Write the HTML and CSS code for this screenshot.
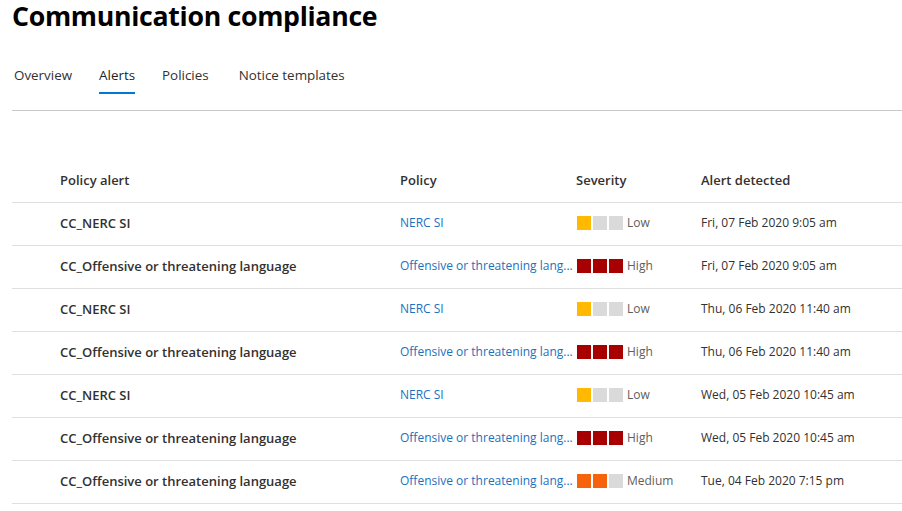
FILE: index.html
```html
<!DOCTYPE html>
<html>
<head>
<meta charset="utf-8">
<link rel="stylesheet" href="styles.css">
</head>
<body>
<div class="page">
  <h1 class="title">Communication compliance</h1>
  <nav class="tabs">
    <a class="tab">Overview</a>
    <a class="tab active">Alerts</a>
    <a class="tab">Policies</a>
    <a class="tab notice">Notice templates</a>
  </nav>
  <div class="table">
    <div class="row head">
      <div class="c1">Policy alert</div>
      <div class="c2">Policy</div>
      <div class="c3">Severity</div>
      <div class="c4">Alert detected</div>
    </div>
    <div class="row">
      <div class="c1 name">CC_NERC SI</div>
      <div class="c2 link">NERC SI</div>
      <div class="c3 sev"><span class="sq low"></span><span class="sq"></span><span class="sq"></span><span class="lbl">Low</span></div>
      <div class="c4 date">Fri, 07 Feb 2020 9:05 am</div>
    </div>
    <div class="row">
      <div class="c1 name">CC_Offensive or threatening language</div>
      <div class="c2 link">Offensive or threatening lang...</div>
      <div class="c3 sev"><span class="sq high"></span><span class="sq high"></span><span class="sq high"></span><span class="lbl">High</span></div>
      <div class="c4 date">Fri, 07 Feb 2020 9:05 am</div>
    </div>
    <div class="row">
      <div class="c1 name">CC_NERC SI</div>
      <div class="c2 link">NERC SI</div>
      <div class="c3 sev"><span class="sq low"></span><span class="sq"></span><span class="sq"></span><span class="lbl">Low</span></div>
      <div class="c4 date">Thu, 06 Feb 2020 11:40 am</div>
    </div>
    <div class="row">
      <div class="c1 name">CC_Offensive or threatening language</div>
      <div class="c2 link">Offensive or threatening lang...</div>
      <div class="c3 sev"><span class="sq high"></span><span class="sq high"></span><span class="sq high"></span><span class="lbl">High</span></div>
      <div class="c4 date">Thu, 06 Feb 2020 11:40 am</div>
    </div>
    <div class="row">
      <div class="c1 name">CC_NERC SI</div>
      <div class="c2 link">NERC SI</div>
      <div class="c3 sev"><span class="sq low"></span><span class="sq"></span><span class="sq"></span><span class="lbl">Low</span></div>
      <div class="c4 date">Wed, 05 Feb 2020 10:45 am</div>
    </div>
    <div class="row">
      <div class="c1 name">CC_Offensive or threatening language</div>
      <div class="c2 link">Offensive or threatening lang...</div>
      <div class="c3 sev"><span class="sq high"></span><span class="sq high"></span><span class="sq high"></span><span class="lbl">High</span></div>
      <div class="c4 date">Wed, 05 Feb 2020 10:45 am</div>
    </div>
    <div class="row">
      <div class="c1 name">CC_Offensive or threatening language</div>
      <div class="c2 link">Offensive or threatening lang...</div>
      <div class="c3 sev"><span class="sq med"></span><span class="sq med"></span><span class="sq"></span><span class="lbl">Medium</span></div>
      <div class="c4 date">Tue, 04 Feb 2020 7:15 pm</div>
    </div>
  </div>
</div>
</body>
</html>
```
FILE: styles.css
```css
* { box-sizing: border-box; }
html, body { margin: 0; padding: 0; background: #fff; }
body { font-family: "Open Sans", "Noto Sans", sans-serif; color: #323130; }
.page { padding: 0 0 0 12px; }
.title {
  margin: 0;
  padding-top: 1px;
  font-size: 26.7px;
  font-weight: 700;
  line-height: 30px;
  color: #000;
  letter-spacing: -0.3px;
}
.tabs {
  display: flex;
  gap: 27px;
  margin-top: 28px;
  padding-left: 2px;
  border-bottom: 1px solid #c8c8c8;
  height: 52px;
}
.tab {
  font-size: 13.4px;
  color: #323130;
  padding: 6px 0 0;
  height: 35px;
  line-height: 20px;
}
.tab.notice { margin-left: 3px; }
.tab.active { border-bottom: 2px solid #0078d4; color: #201f1e; padding-bottom: 0; height: 35px; }
.table { margin-top: 47px; }
.row {
  display: grid;
  grid-template-columns: 340px 176px 125px 1fr;
  padding-left: 48px;
  padding-bottom: 3px;
  height: 43px;
  align-items: center;
  border-bottom: 1px solid #e1dfdd;
  font-size: 12px;
}
.row.head { height: 45px; padding-bottom: 0; font-size: 13px; font-weight: 600; color: #323130; }
.name { font-size: 13px; font-weight: 600; color: #323130; }
.link { color: #1d70bd; }
.date { color: #323130; }
.sev { display: flex; align-items: center; padding-left: 1px; }
.sq { width: 14px; height: 14px; background: #dadada; margin-right: 2px; }
.sq.low { background: #ffb900; }
.sq.high { background: #a80000; }
.sq.med { background: #f7630c; }
.lbl { margin-left: 2px; color: #605e5c; }
```
